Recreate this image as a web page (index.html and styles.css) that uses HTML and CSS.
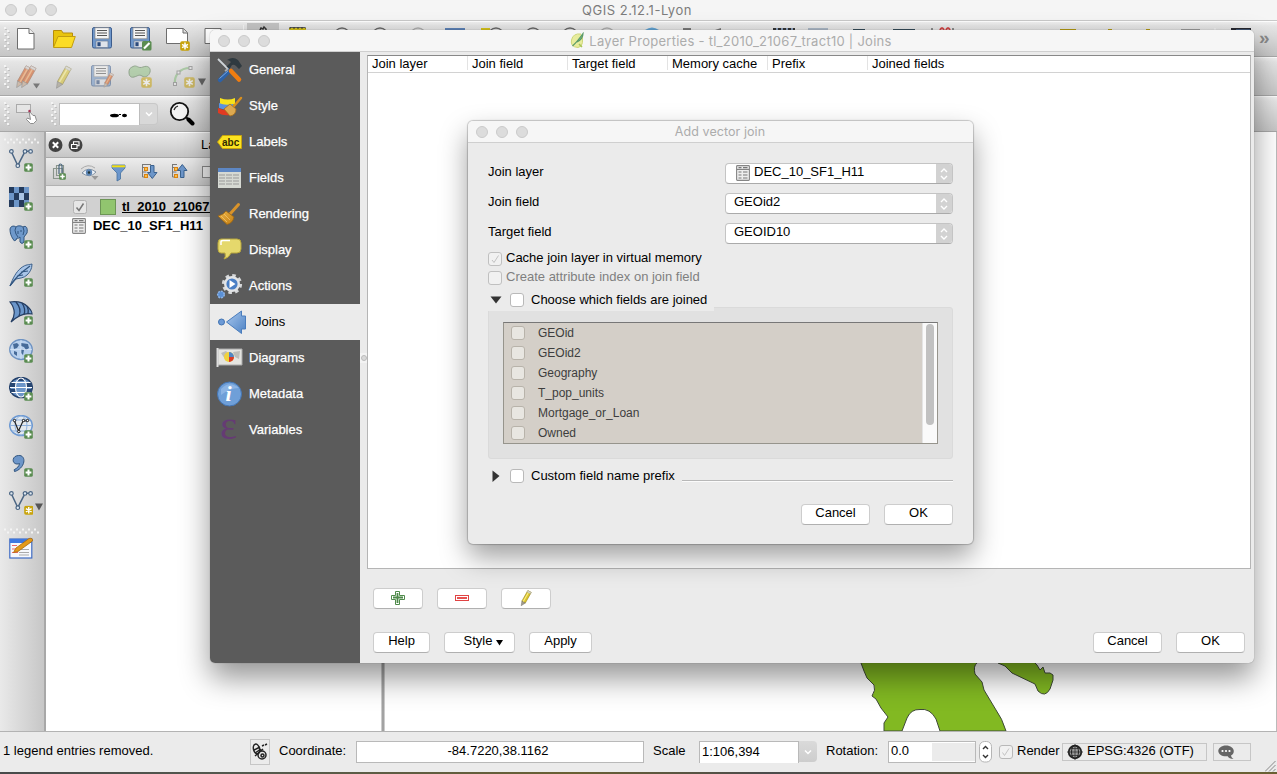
FILE: index.html
```html
<!DOCTYPE html>
<html lang="en">
<head>
<meta charset="utf-8">
<title>QGIS 2.12.1-Lyon</title>
<link rel="stylesheet" href="styles.css">
</head>
<body>
<svg class="defs" width="0" height="0">
  <defs>
    <linearGradient id="gBlue" x1="0" y1="0" x2="1" y2="1"><stop offset="0" stop-color="#a9c8ee"/><stop offset="1" stop-color="#4d82c4"/></linearGradient>
    <linearGradient id="gGold" x1="0" y1="0" x2="1" y2="1"><stop offset="0" stop-color="#f0b84a"/><stop offset="1" stop-color="#c27c10"/></linearGradient>
    <symbol id="plus" viewBox="0 0 9 9"><rect x=".2" y=".2" width="8.6" height="8.6" rx="1.6" fill="#5a8c51"/><path d="M4.5 1.6v5.8M1.6 4.5h5.8" stroke="#fff" stroke-width="2"/></symbol>
    <symbol id="star" viewBox="0 0 10 10"><rect x=".2" y=".2" width="9.6" height="9.6" rx="1.8" fill="#c9a40c"/><path d="M5 1.5v7M2 3.3l6 3.4M8 3.3L2 6.7" stroke="#fff" stroke-width="1.5"/></symbol>
    <symbol id="floppy" viewBox="0 0 20 22"><rect x=".5" y=".5" width="19" height="20.5" rx="1.6" fill="#6f97cb" stroke="#3c5c8c"/><rect x="3" y=".8" width="14" height="11" fill="#f4f4f4" stroke="#888" stroke-width=".7"/><path d="M5 3.5h10M5 6h10M5 8.5h10" stroke="#555" stroke-width="1.1"/><rect x="4" y="14" width="12" height="6.5" fill="#dfe3ea" stroke="#6a7b94" stroke-width=".7"/><rect x="5.4" y="15.2" width="3.2" height="4" fill="#2b4a7c"/></symbol>
    <symbol id="vnodes" viewBox="0 0 24 24"><path d="M2.8 3.8L8.2 15.3M9.4 15.3L15.3 3.8M17.5 2.3h3" fill="none" stroke="#4a6583" stroke-width="1.5"/><g fill="#dfe8f0" stroke="#4a6583" stroke-width="1.2"><circle cx="2.4" cy="2.4" r="1.8"/><circle cx="8.8" cy="16.7" r="1.8"/><circle cx="16" cy="2.4" r="1.8"/><circle cx="21.6" cy="2.4" r="1.8"/></g></symbol>
    <symbol id="table" viewBox="0 0 14 16"><rect x=".6" y=".6" width="12.8" height="14.8" rx=".8" fill="#eee" stroke="#858585" stroke-width="1.1"/><path d="M1 4.4h12" stroke="#777"/><path d="M2.500 2.600h3M7 2.600h4.500M2.500 7h3M7 7h4.500M2.500 10h3M7 10h4.500M2.500 13h3M7 13h4.500" stroke="#777" stroke-width="1.1"/></symbol>
    <symbol id="pencil" viewBox="0 0 16 22"><path d="M10.500 .8l4.700 2.500L7 18 2.300 15.300z" fill="#dcc62e" stroke="#907c14" stroke-width=".8"/><path d="M12 2.500L4 16" stroke="#fbf08a" stroke-width="1.400"/><path d="M2.300 15.300L7 18l-5.600 3.600z" fill="#a39c88" stroke="#666" stroke-width=".6"/><path d="M10.500 .8l4.700 2.500-1.200 2L9.300 2.800z" fill="#d8d8cc" stroke="#999" stroke-width=".5"/></symbol>
    <symbol id="pencilRed" viewBox="0 0 16 22"><path d="M10.500 .8l4.700 2.500L7 18 2.300 15.300z" fill="#d8591c" stroke="#8a4a26" stroke-width=".7"/><path d="M12.800 2L4.500 16.600" stroke="#f4a05c" stroke-width="1.500"/><path d="M2.300 15.300L7 18l-5.600 3.600z" fill="#c9a88c" stroke="#666" stroke-width=".6"/><path d="M10.500 .8l4.700 2.500-1.200 2L9.300 2.800z" fill="#d8d0cc" stroke="#888" stroke-width=".5"/></symbol>
    <pattern id="gripV" width="6" height="6" patternUnits="userSpaceOnUse"><rect x="0" y="0" width="2" height="2" fill="#f4f4f4"/><rect x="3" y="3" width="2" height="2" fill="#f4f4f4"/><path d="M1 2.500h2M4 5.500h2" stroke="#c0c0c0" stroke-width="1"/></pattern>
  </defs>
</svg>

<div class="app">
  <header class="titlebar">
    <div class="lights"><i></i><i></i><i></i></div>
    <div class="title title-main">QGIS 2.12.1-Lyon</div>
  </header>

  <div class="toolbar row-file">
    <svg class="grip" width="7" height="24"><rect width="6" height="24" fill="url(#gripV)"/></svg>
    <span class="tool"><svg width="24" height="24"><path d="M3.500 1.500h11.500l5 5v15.500H3.500z" fill="#fff" stroke="#6d6d6d"/><path d="M15 1.500v5h5" fill="#eee" stroke="#6d6d6d"/></svg></span>
    <span class="tool"><svg width="24" height="24"><path d="M1.500 20V3.500h8l1.500 2.500h9.500V9" fill="#e9c40e" stroke="#b78d0c"/><path d="M1.500 20.500L6 9.500h17.300L19.500 20.500z" fill="#fbdc26" stroke="#c29d10"/></svg></span>
    <span class="tool"><svg width="24" height="24"><use href="#floppy" x="2" y="0" width="20" height="22"/></svg></span>
    <span class="tool"><svg width="24" height="24"><use href="#floppy" x="2" y="0" width="20" height="22"/><rect x="14" y="14" width="9.500" height="9.500" rx="1.500" fill="#5a8c51"/><path d="M16 21.500l5.500-5.500" stroke="#fff" stroke-width="2.200"/></svg></span>
    <span class="tool"><svg width="26" height="24"><path d="M1.500 1.500h17l4 4v11H1.500z" fill="#fff" stroke="#6d6d6d"/><path d="M18 1.500v4.500h4.500" fill="#ddd" stroke="#6d6d6d"/><use href="#star" x="15" y="14" width="10" height="10"/></svg></span>
    <span class="tool"><svg width="24" height="24"><path d="M1 1.500h16v15H1z" fill="#fff" stroke="#6d6d6d"/></svg></span>
    <svg class="more-tools" width="1018" height="34">
      <path d="M8.500 3v29M980 6v20" stroke="#f4f4f4"/>
      <path d="M12 1h32v30H12z" fill="#c4c4c4"/>
      <path d="M25 8l1-2 2 1 1-2 2 2v4M55 6h15" fill="none" stroke="#333" stroke-width="1.500"/>
      <path d="M54 6h17v4H54z" fill="#d3c01b"/>
      <path d="M54 6h17" stroke="#333" stroke-dasharray="2 2"/>
      <g fill="none" stroke="#666" stroke-width="1.300"><circle cx="107" cy="14" r="8"/><circle cx="145" cy="14" r="8"/><circle cx="183" cy="14" r="8" stroke="#aaa"/><circle cx="261" cy="14" r="8"/><circle cx="298" cy="14" r="8"/><circle cx="335" cy="14" r="8"/><circle cx="372" cy="14" r="8" stroke="#aaa"/></g>
      <path d="M210 6h20v5h-20z" fill="#5b80b4"/><path d="M246 6h9v4h-9z" fill="#d3c01b"/>
      <path d="M410 8q7-5 14 0z" fill="#60a0cf"/><path d="M448 6h8v3h-8zM480 8l6-2v3z" fill="#777"/>
      <path d="M538 6h22v4h-22z" fill="#8ba0bd"/><path d="M538 7h22" stroke="#333" stroke-width="2" stroke-dasharray="3 2"/>
      <path d="M573 6h20v3h-20z" fill="#a8b4c2"/><path d="M618 8h12M658 8h22" stroke="#354a58" stroke-width="2"/>
      <path d="M697 6v4M718 6v4" stroke="#333"/><path d="M705 8q2-4 4 0M711 8q2-4 4 0" stroke="#c44" stroke-width="2" fill="none"/>
      <path d="M825 8h16M873 8h4M911 8h4" stroke="#b39912" stroke-width="2"/><path d="M946 8h19" stroke="#999" stroke-width="2"/>
      <path d="M996 6h20v4h-20z" fill="#27282f"/><path d="M1001 8h14" stroke="#5b80b4"/>
    </svg>
    <span class="overflow">»</span>
  </div>

  <div class="toolbar row-edit">
    <svg class="grip" width="7" height="24"><rect width="6" height="24" fill="url(#gripV)"/></svg>
    <span class="tool faded"><svg width="28" height="24"><use href="#pencilRed" x="3" y="0" width="17" height="23"/><use href="#pencilRed" x="8" y="0" width="17" height="23"/></svg><svg class="caret" width="7" height="6"><path d="M0 .5h7L3.500 5.500z" fill="#333"/></svg></span>
    <span class="tool faded"><svg width="24" height="24"><use href="#pencil" x="3" y="0" width="17" height="24"/></svg></span>
    <span class="tool faded"><svg width="24" height="24"><use href="#floppy" x="1" y="0" width="20" height="22"/><use href="#pencilRed" x="13" y="7" width="11" height="16"/></svg></span>
    <span class="tool faded"><svg width="24" height="24"><path d="M5 1.500C9-.5 10 4 15 2c5-2 8 1 7 5s-5 6-8 4-4 0-8 1S1 10 1 7s1-4 4-5.500z" fill="#93c286" stroke="#55774e"/><use href="#star" x="13" y="12" width="11" height="11"/></svg></span>
    <span class="tool wide faded"><svg width="24" height="24"><path d="M4 19C3 10 9 3 19 3" fill="none" stroke="#83ba78" stroke-width="2.200"/><g fill="#eee" stroke="#777"><rect x="2.500" y="17.500" width="3" height="3"/><rect x="6" y="6" width="3" height="3"/><rect x="18" y="1.500" width="3" height="3"/></g><use href="#star" x="13" y="12" width="11" height="11"/></svg><svg class="caret-lg" width="8" height="8"><path d="M0 .5h8L4 7.500z" fill="#111"/></svg></span>
  </div>

  <div class="toolbar row-find">
    <svg class="grip" width="7" height="24"><rect width="6" height="24" fill="url(#gripV)"/></svg>
    <svg class="identify" width="26" height="26"><rect x="1.500" y="3.500" width="14" height="8" fill="#e5e5e5" stroke="#aaa"/><path d="M14 10l4 4.500h2l1.500 5-3 3h-3l-4-4 1-1.500 3 1.500z" fill="#fff" stroke="#777" stroke-width=".8"/><circle cx="14.500" cy="10" r="1.200" fill="#a35"/></svg>
    <svg class="grip second" width="7" height="24"><rect width="6" height="24" fill="url(#gripV)"/></svg>
    <div class="find-box"><span class="find-input"><svg width="17" height="5"><ellipse cx="4.500" cy="2.500" rx="4.500" ry="1.800"/><ellipse cx="14.500" cy="2.500" rx="2.500" ry="1.800"/><path d="M9 1h2v1H9z"/></svg></span><span class="find-drop"><svg width="10" height="8"><path d="M2 2.500l3 3 3-3" fill="none" stroke="#fff" stroke-width="1.500"/></svg></span></div>
    <svg class="lens" width="26" height="26"><circle cx="10.500" cy="10.500" r="8.700" fill="#f3f3f3" stroke="#111" stroke-width="1.800"/><path d="M5 9a6 6 0 0 1 4-4" fill="none" stroke="#222" stroke-width="1.300"/><path d="M17 16l2 2" stroke="#111" stroke-width="2"/><path d="M19.500 18.500l4 4" stroke="#000" stroke-width="4" stroke-linecap="round"/></svg>
  </div>

  <main class="work">
    <aside class="layer-tools">
      <svg class="hgrip" width="36" height="7"><path d="M0 1.500h36" stroke="#f4f4f4" stroke-width="2" stroke-dasharray="2 4"/><path d="M3 4.500h33" stroke="#f4f4f4" stroke-width="2" stroke-dasharray="2 4"/></svg>
      <span class="cell"><svg width="24" height="24"><use href="#vnodes" width="24" height="24"/><use href="#plus" x="15" y="14" width="9" height="9"/></svg></span>
      <span class="cell"><svg width="24" height="24"><rect width="20" height="20" fill="#6d96c8"/><path d="M0 0h5v6H0zM10 0h5v6h-5zM5 6h5v7H5zM15 6h5v7h-5zM0 13h5v7H0zM10 13h5v7h-5z" fill="#243b5c"/><path d="M10 6h5v7h-5z" fill="#a9c4e4"/><use href="#plus" x="15" y="15" width="9" height="9"/></svg></span>
      <span class="cell"><svg width="24" height="24"><path d="M1 4C2 0 6 1 7 2c2-2 6-1 7 0 3-2 5 1 4 6l-3 4v5q-2 3-4 0v-5q-2 2-3 1l-1 2q-2 2-3-1C2 11 1 8 1 4z" fill="#6f99cb" stroke="#31557f"/><path d="M7 2Q5 5 7 9l2 3M14 2q2 4 0 8M9 6v3M12 5v2" fill="none" stroke="#31557f"/><use href="#plus" x="15" y="15" width="9" height="9"/></svg></span>
      <span class="cell"><svg width="24" height="24"><path d="M1 23C4 15 7 9 12 5s8-3 11-4c0 5-2 8-5 11S11 15 7 16z" fill="#a8c5e8" stroke="#3b5f8a"/><path d="M1 23Q7 13 21 3M8 13l6-1M12 9l7-1" fill="none" stroke="#31557f" stroke-width="1.200"/><use href="#plus" x="15" y="15" width="9" height="9"/></svg></span>
      <span class="cell"><svg width="24" height="24"><path d="M1 1c7-1 14 1 18 5s4 5 4 7q-10-2-21 8Q9 11 1 1z" fill="#6b96ca" stroke="#253e63" stroke-width="1.200"/><path d="M7 1q6 7 3 14M13 2q4 6 2 11.500M18 5q2 4 1 8" fill="none" stroke="#253e63" stroke-width="1.300"/><use href="#plus" x="15" y="15" width="9" height="9"/></svg></span>
      <span class="cell"><svg width="24" height="24"><ellipse cx="12" cy="10.500" rx="11.300" ry="10" fill="#b8d0ed" stroke="#6e93c2" stroke-width="1.300"/><path d="M4 5l4-1 2 2-2 3-3 1zM12 4l7 1 1 4-3 2-2-3-3-1zM12 10l3 1-1 5-2-2zM5 12l3 1v4l-3-2z" fill="#466b99"/><path d="M1 10.500h22M12 1v19" stroke="#e0ebf7" stroke-width=".6"/><use href="#plus" x="15" y="15" width="9" height="9"/></svg></span>
      <span class="cell"><svg width="24" height="24"><ellipse cx="12" cy="10.500" rx="11.300" ry="10" fill="#6d96c9" stroke="#24416b" stroke-width="1.500"/><path d="M1 6h6v4H1zM17 6h6v4h-6zM1 12h6v4H1zM17 12h6v4h-6zM8 1h8v3H8z" fill="#274672"/><path d="M1 10.500h22M2.500 5.500h19M2.500 15.500h19" stroke="#fff" stroke-width="1.100"/><ellipse cx="12" cy="10.500" rx="5.500" ry="9.500" fill="none" stroke="#fff" stroke-width="1.100"/><use href="#plus" x="15" y="15" width="9" height="9"/></svg></span>
      <span class="cell"><svg width="24" height="24"><ellipse cx="12" cy="10.500" rx="11.300" ry="10" fill="#e3e9ee" stroke="#6e9ad3" stroke-width="1.500"/><path d="M1 10.500h22M3 5h18M3 16h18" stroke="#8fb1dd"/><ellipse cx="12" cy="10.500" rx="6" ry="9.500" fill="none" stroke="#8fb1dd"/><path d="M5.500 6L9.500 16 14 6h5" fill="none" stroke="#222" stroke-width="1.200"/><g fill="#fff" stroke="#111"><circle cx="5.500" cy="5.500" r="1.200"/><circle cx="9.800" cy="16.500" r="1.200"/><circle cx="14.500" cy="5.500" r="1.200"/><circle cx="18.500" cy="5.500" r="1.200"/></g><use href="#plus" x="15" y="15" width="9" height="9"/></svg></span>
      <span class="cell"><svg width="24" height="24"><path d="M9.500 2.500c4-.5 6 3 5.300 6.500C14 13.500 10 17.500 5.500 18.500l-.3-1.800c3-1.500 5-3.500 5.300-6.200C7 12 3.800 10 4.200 6.700 4.500 4 6.700 2.700 9.500 2.500z" fill="#6d96c9" stroke="#31557f"/><use href="#plus" x="15" y="15" width="9" height="9"/></svg></span>
      <span class="cell"><svg width="24" height="24"><use href="#vnodes" width="24" height="24"/><use href="#star" x="15" y="14.500" width="9.500" height="9.500"/></svg><svg class="cell-caret" width="8" height="8"><path d="M0 .5h8L4 7.500z" fill="#555"/></svg></span>
      <svg class="hgrip low" width="36" height="7"><path d="M0 1.500h36" stroke="#f4f4f4" stroke-width="2" stroke-dasharray="2 4"/><path d="M3 4.500h33" stroke="#f4f4f4" stroke-width="2" stroke-dasharray="2 4"/></svg>
      <svg class="form-icon" width="24" height="24"><rect x=".8" y="2" width="22" height="19" fill="#f6f8fc" stroke="#3f6cc4" stroke-width="1.200"/><path d="M1 2h22v4H1z" fill="#3d78e0"/><path d="M3 8.500h5M3 12h4M3 15.500h6" stroke="#e66" stroke-width="1.200"/><path d="M10 15.500h10M10 12.500h10M10 18h10" stroke="#aaa"/><path d="M20 1.500q4-1 3.500 2.500L9 14.500l-4.500 1L7 11z" fill="#e39a1a" stroke="#a8690c" stroke-width=".8"/></svg>
    </aside>

    <section class="layers">
      <div class="panel-head">
        <svg width="38" height="16"><circle cx="7.500" cy="8" r="7" fill="#424242"/><path d="M4.800 5.300l5.400 5.400M10.200 5.300l-5.400 5.400" stroke="#fff" stroke-width="2"/><circle cx="27.500" cy="8" r="7" fill="#424242"/><path d="M23.500 7.500h5.500v4h-5.500zM25.500 7V4.700H31v4h-2" fill="none" stroke="#fff" stroke-width="1.100"/></svg>
        <span class="panel-title">La</span>
      </div>
      <div class="panel-tools">
        <svg width="160" height="20">
          <path d="M2.500 6.500h9v10h-9zM5.500 3.500h7v10h-7z" fill="none" stroke="#8a958c" stroke-width="1.100"/><path d="M8 12V4q0-2 1.500-2T11 4v7" fill="none" stroke="#49667e" stroke-width="1.200"/><use href="#plus" x="8" y="11" width="7" height="7"/>
          <path d="M31 11q6-7 14-1-6 7-14 1z" fill="#f2f6fb" stroke="#8090a0"/><circle cx="38" cy="10.500" r="3.200" fill="#5c85b5"/><circle cx="38" cy="10.500" r="1.200" fill="#233"/><path d="M30 7q7-6 14-1" fill="none" stroke="#aaa"/><path d="M40.500 14h7L44 18z" fill="#999"/>
          <path d="M61 3h13v3l-4.500 5v6l-3.500 2v-8L61 6z" fill="#6b96cc" stroke="#44709e" stroke-width=".8"/><path d="M61 3.300h13v2H61z" fill="#f3df12"/>
          <path d="M91.500 2v13h4M91.500 5.500h4M91.500 10h4M92 2.500h8" fill="none" stroke="#777"/><rect x="93.500" y="5.500" width="3" height="3" fill="#f8c04c" stroke="#db8211"/><rect x="93.500" y="12.500" width="3" height="3" fill="#f8c04c" stroke="#db8211"/>
          <path d="M99.500 3.500h3.500v7h3l-4.700 6-4.800-6h3z" fill="#6d96c9" stroke="#3b628f"/>
          <path d="M121.500 2v13h4M121.500 5.500h4M121.500 10h4M122 2.500h4" fill="none" stroke="#777"/><rect x="123.500" y="5.500" width="3" height="3" fill="#f8c04c" stroke="#db8211"/><rect x="123.500" y="12.500" width="3" height="3" fill="#f8c04c" stroke="#db8211"/><path d="M129.500 15.500h3.500V8.500h3l-4.700-6-4.800 6h3z" fill="#6d96c9" stroke="#3b628f"/>
          <rect x="151.500" y="4.500" width="12" height="11" fill="#eee" stroke="#888"/>
        </svg>
      </div>
      <div class="panel-gap"></div>
      <div class="layer-row selected">
        <svg class="chk" width="14" height="14"><rect x=".5" y=".5" width="13" height="13" rx="2" fill="#e6e6e6" stroke="#b2b2b2"/><path d="M3.500 7.500l2.500 3 4.500-7" fill="none" stroke="#777" stroke-width="1.500"/></svg>
        <span class="swatch"></span><span class="layer-name underline">tl_2010_21067_tract10</span>
      </div>
      <div class="layer-row plain"><svg width="14" height="16"><use href="#table" width="14" height="16"/></svg><span class="layer-name">DEC_10_SF1_H11</span></div>
    </section>

    <div class="splitter"></div>
    <section class="map">
      <svg width="891" height="599" viewBox="385 132 891 599">
        <path d="M858 640L861 663 864 671 867 678 874 685Q876 690 872 696L876 699 881 708 888 717 884 723 884 731H902L907 718Q911 709 920 709.500 930 708 936 719L940 731H1006Q1002 718 996 710L990 700 984 690 982 682 975 674Q973 666 977 663V640z" fill="#82b922" stroke="#3f4a38"/>
        <path d="M990 655L998 663 1005 666 1012 673 1035 684 1038 691Q1045 698 1050 689L1053 680 1053 675 1050 673H1045L1043 667 1040 670 1037 665 1035 663V655z" fill="#82b922" stroke="#3f4a38"/>
      </svg>
    </section>
  </main>

  <footer class="status">
    <span class="st-msg">1 legend entries removed.</span>
    <span class="st-track"><svg width="18" height="20"><g fill="none" stroke="#222" stroke-width="1.500"><ellipse cx="5.500" cy="7" rx="3" ry="5" transform="rotate(-15 5.500 7)"/><path d="M3 8l6-3M4 11l6-4M4 14l8-7"/><ellipse cx="11" cy="13" rx="4" ry="4"/><circle cx="11.500" cy="13.500" r="1.500"/><path d="M11 4l2-1M14 3l2-1"/></g></svg></span>
    <span class="st-label coord-l">Coordinate:</span>
    <span class="st-input coord">-84.7220,38.1162</span>
    <span class="st-label scale-l">Scale</span>
    <span class="st-scale"><b>1:106,394</b><i><svg width="10" height="8"><path d="M2 2.500l3 3 3-3" fill="none" stroke="#fff" stroke-width="1.500"/></svg></i></span>
    <span class="st-label rot-l">Rotation:</span>
    <span class="st-input rot"><span>0.0</span><i></i></span>
    <svg class="st-spin" width="13" height="22"><rect x=".5" y=".5" width="12" height="20.500" rx="5" fill="#fff" stroke="#b5b5b5"/><path d="M4 8l2.500-2.500L9 8M4 14l2.500 2.500L9 14" fill="none" stroke="#333" stroke-width="1.400"/></svg>
    <svg class="st-chk" width="14" height="14"><rect x=".5" y=".5" width="13" height="13" rx="2.500" fill="#f1f1f1" stroke="#b8b8b8"/><path d="M3.500 7.500l2 3 4.500-7" fill="none" stroke="#c4c4c4"/></svg>
    <span class="st-label render-l">Render</span>
    <span class="st-box epsg"><svg width="16" height="16"><circle cx="8" cy="8" r="6.300" fill="#9a9a9a" stroke="#222" stroke-width="1.800"/><path d="M0 8h16M8 0v16M3 4.500h10M3 11.500h10" stroke="#333" stroke-width=".8"/><ellipse cx="8" cy="8" rx="3.500" ry="6.500" fill="none" stroke="#222"/></svg><span>EPSG:4326 (OTF)</span></span>
    <span class="st-box msgs"><svg width="17" height="15"><path d="M8 .5c4.500 0 7.800 2.500 7.800 5.500 0 2-1 3.500-2.800 4.500.2 1.500 1.200 2.800 2.500 3.500-3 0-4.800-1-5.800-2.700H8C3.500 11.300.3 9 .3 6S3.500.5 8 .5z" fill="#666"/><circle cx="4.500" cy="6" r="1.100" fill="#fff"/><circle cx="8" cy="6" r="1.100" fill="#fff"/><circle cx="11.500" cy="6" r="1.100" fill="#fff"/></svg></span>
    <svg class="resize" width="11" height="11"><path d="M0 10.500L10.500 0M4 10.500L10.500 4M8 10.500l2.500-2.500" stroke="#888"/></svg>
  </footer>
  <div class="desk"></div>
</div>

<div class="window props">
  <header class="win-bar">
    <div class="lights"><i></i><i></i><i></i></div>
    <div class="title title-props"><svg width="15" height="17"><path d="M11 2Q3 1 1.500 8T8 15.500q4-.5 4.500-5V4" fill="#e7ec9c" stroke="#cdd678"/><path d="M2.500 14Q7 10 13 1.500 13 7 7 10" fill="#7fb98a" stroke="#5a9a68" stroke-width="1.200"/><path d="M9 12l3 3" stroke="#a8c558" stroke-width="1.500"/></svg><span>Layer Properties - tl_2010_21067_tract10 | Joins</span></div>
  </header>
  <div class="props-body">
    <nav class="side">
      <a><svg width="30" height="28"><path d="M3 3l12 12" stroke="#cfd4d8" stroke-width="1.800"/><path d="M14 15L5 24" stroke="#2d62a8" stroke-width="4.500" stroke-linecap="round"/><path d="M13 15L4.500 22.500" stroke="#79a5dc" stroke-width="1"/><path d="M16 15l8 8.500" stroke="#f07d10" stroke-width="4.500" stroke-linecap="round"/><path d="M13 13l-3 2" stroke="#aaa" stroke-width="2"/><path d="M12 4q6-4 11 0l4 6-3 3-3-3q-2-2-4-1l-2.500 4-3-2.500L16 6q-2-2-4-2z" fill="#2f3a40"/></svg>General</a>
      <a><svg width="30" height="28"><path d="M5 6q8 3 15 0v6q-7 3-15 0z" fill="#f8e21c"/><path d="M4 11q6 3 14 1v5q-7 2-14-1z" fill="#5a92e0"/><path d="M3 16q6 3 14 2l-2 5q-7 1-12-2z" fill="#e23a22"/><path d="M26 6l-7 8" stroke="#d98f1e" stroke-width="2.500" stroke-linecap="round"/><path d="M15 12l6 5q0 6-6 7l-6-7z" fill="#dda950" stroke="#a8701a" stroke-width=".8"/></svg>Style</a>
      <a><svg width="30" height="28"><path d="M2.500 14l5-6.500h19v13h-19z" fill="#fbe321" stroke="#c8a40d"/><text x="7" y="18" class="abc">abc</text></svg>Labels</a>
      <a><svg width="30" height="28"><rect x="3" y="4" width="23" height="20" fill="#d6d9d3"/><path d="M3 4h23v4H3z" fill="#5d87c4"/><path d="M4 11h21M4 14h21M4 17h21M4 20h21" stroke="#999" stroke-dasharray="6 1"/></svg>Fields</a>
      <a><svg width="30" height="28"><path d="M23.500 4.500L15 14" stroke="#d9932a" stroke-width="3" stroke-linecap="round"/><path d="M11 11l8 6q-1 6-7 7.500L3 16q5-1 8-5z" fill="url(#gGold)" stroke="#9c6411" stroke-width=".8"/><path d="M9 14l6 6M6 16l6 6" stroke="#f5c877" stroke-width=".7"/></svg>Rendering</a>
      <a><svg width="30" height="28"><path d="M6 3h16q4 0 4 4v6q0 4-4 4h-6q-2 5-7 6 2-2 1-6H6q-3 0-3-4V7q0-4 3-4z" fill="#e5d86c" stroke="#b7a63c"/><path d="M6 9V6q0-1.500 2-1.500h7" stroke="#fff" fill="none" stroke-width="1.500"/></svg>Display</a>
      <a><svg width="30" height="28"><circle cx="17" cy="12" r="8.600" fill="none" stroke="#d6d8da" stroke-width="3" stroke-dasharray="3.500 3.250"/><circle cx="17" cy="12" r="6.800" fill="#4a7fc5" stroke="#e2e4e6" stroke-width="2.400"/><path d="M14.500 8v8l6-4z" fill="#fff"/><circle cx="6" cy="22.500" r="3.300" fill="#5a90d6" stroke="#8fb4e4" stroke-width="1.500" stroke-dasharray="2 1"/></svg>Actions</a>
      <a class="active"><svg width="36" height="28"><circle cx="6.500" cy="14" r="3" fill="#6c9ad6" stroke="#4173b2"/><path d="M11.500 14L26.500 3v5h4v13h-4v4.500z" fill="url(#gBlue)" stroke="#4a7dbd"/></svg>Joins</a>
      <a><svg width="30" height="28"><path d="M3 5h24v16H3z" fill="#e4e4e0" stroke="#aaa"/><path d="M2.500 4v19" stroke="#ddd" stroke-width="2"/><path d="M6 9l5-2 3 3-4 5zM18 8l7-1-1 8-4-2z" fill="#bdbdb8"/><circle cx="14" cy="13" r="5" fill="#f0d23c"/><path d="M14 13V8a5 5 0 0 1 5 5z" fill="#5185c4"/><path d="M14 13h5a5 5 0 0 1-5 5z" fill="#da3b27"/></svg>Diagrams</a>
      <a><svg width="30" height="28"><circle cx="14.500" cy="14" r="12" fill="#6f9fd8" stroke="#4475b4"/><path d="M6 9q8-9 18-1-9 0-18 7z" fill="#8cb4e4"/><text x="10.500" y="21" class="info-i">i</text></svg>Metadata</a>
      <a><svg class="open" width="30" height="28"><text x="5" y="22.500" class="eps">ε</text></svg>Variables</a>
    </nav>
    <div class="side-handle"><i></i></div>
    <div class="props-main">
      <div class="join-table"><div class="join-head"><span>Join layer</span><span>Join field</span><span>Target field</span><span>Memory cache</span><span>Prefix</span><span>Joined fields</span></div></div>
      <div class="icon-buttons">
        <button class="btn"><svg width="16" height="16"><path d="M5.500 1.500h4v4h5v4h-5v5h-4v-5h-4v-4h4z" fill="#fff" stroke="#4f8a4a"/><path d="M7.500 3v10M3 7.500h10" stroke="#4f8a4a" stroke-width="1.800"/></svg></button>
        <button class="btn"><svg width="16" height="16"><rect x="1.500" y="5.500" width="13" height="5" fill="#fff" stroke="#e04444"/><path d="M3 8h10" stroke="#e85050" stroke-width="2"/></svg></button>
        <button class="btn"><svg width="16" height="16"><use href="#pencil" x="2" y="0" width="12" height="16"/></svg></button>
      </div>
      <div class="props-actions">
        <button class="btn help">Help</button><button class="btn style">Style<svg width="7" height="6"><path d="M0 0h7L3.500 5.500z"/></svg></button><button class="btn apply">Apply</button>
        <span class="spacer"></span><button class="btn dlg">Cancel</button><button class="btn dlg">OK</button>
      </div>
    </div>
  </div>
</div>

<div class="window join">
  <header class="win-bar">
    <div class="lights"><i></i><i></i><i></i></div>
    <div class="title title-join">Add vector join</div>
  </header>
  <div class="join-body">
    <div class="field"><label>Join layer</label><div class="select with-icon"><svg width="14" height="16"><use href="#table" width="14" height="16"/></svg><span>DEC_10_SF1_H11</span><i><svg width="10" height="14"><path d="M2 5l3-3 3 3M2 9l3 3 3-3" fill="none" stroke="#fff" stroke-width="1.400"/></svg></i></div></div>
    <div class="field"><label>Join field</label><div class="select"><span>GEOid2</span><i><svg width="10" height="14"><path d="M2 5l3-3 3 3M2 9l3 3 3-3" fill="none" stroke="#fff" stroke-width="1.400"/></svg></i></div></div>
    <div class="field"><label>Target field</label><div class="select"><span>GEOID10</span><i><svg width="10" height="14"><path d="M2 5l3-3 3 3M2 9l3 3 3-3" fill="none" stroke="#fff" stroke-width="1.400"/></svg></i></div></div>
    <div class="option"><span class="box dim"><svg width="12" height="12"><path d="M3 7l2 2.500L9.500 2.500" fill="none" stroke="#c2c2c2"/></svg></span><span>Cache join layer in virtual memory</span></div>
    <div class="option disabled"><span class="box dim"></span><span>Create attribute index on join field</span></div>
    <div class="group-head"><svg width="12" height="8"><path d="M.5 .5h11L6 7.500z" fill="#333"/></svg><span class="box"></span><span>Choose which fields are joined</span></div>
    <div class="group">
      <div class="list">
        <div class="items">
          <div><span class="box tan"></span>GEOid</div><div><span class="box tan"></span>GEOid2</div><div><span class="box tan"></span>Geography</div><div><span class="box tan"></span>T_pop_units</div><div><span class="box tan"></span>Mortgage_or_Loan</div><div><span class="box tan"></span>Owned</div>
        </div>
        <div class="scroll"><i></i></div>
      </div>
    </div>
    <div class="custom"><svg width="8" height="12"><path d="M.5 .5v11.500L7.500 6z" fill="#333"/></svg><span class="box"></span><span>Custom field name prefix</span><hr></div>
    <div class="join-actions"><button class="btn dlg">Cancel</button><button class="btn dlg">OK</button></div>
  </div>
</div>
</body>
</html>
```
FILE: styles.css
```css
* { box-sizing: border-box; }
body { margin: 0; width: 1277px; height: 774px; overflow: hidden; position: relative; font: 13px/16px "Liberation Sans", Arial, sans-serif; color: #000; background: #ebebeb; white-space: nowrap; }
svg { display: block; flex: none; }
svg.open { overflow: visible; }
i, b { font-style: normal; font-weight: normal; }
.defs { position: absolute; }

.app { display: flex; flex-direction: column; width: 1277px; height: 774px; }
.titlebar { height: 21px; flex: none; display: flex; align-items: center; background: #f5f5f5; border-bottom: 1px solid #c9c9c9; }
.lights { display: flex; gap: 8px; padding-left: 5px; flex: none; }
.lights i { width: 12px; height: 12px; border-radius: 50%; background: #dcdcdc; border: 1px solid #cacaca; }
.title { font-family: Inter, Roboto, sans-serif; font-size: 12.500px; color: #acacac; flex: 1; display: flex; justify-content: center; align-items: center; }
.title-main { color: #7c7c7c; padding-right: 60px; font-size: 13px; letter-spacing: .5px; }

.toolbar { flex: none; display: flex; align-items: center; background: linear-gradient(#f0f0f0 0, #e5e5e5 4px, #c6c6c6 100%); border-top: 1px solid #fdfdfd; border-bottom: 1px solid #a8a8a8; overflow: hidden; }
.row-file { height: 36px; }
.row-edit { height: 39px; }
.row-find { height: 36px; }
.grip { margin-left: 4px; margin-right: -4px; }
.tool { width: 38px; height: 24px; flex: none; display: flex; justify-content: center; position: relative; }
.faded { opacity: .55; }
.tool.wide { width: 50px; padding-right: 2px; }
.caret { position: absolute; left: 26px; top: 18px; }
.caret-lg { position: absolute; left: 39px; top: 13px; }
.overflow { font: bold 19px/20px "Liberation Sans", sans-serif; color: #888; padding-bottom: 2px; margin-left: 6px; }
.identify { margin-left: 8px; }
.grip.second { margin-left: 10px; margin-right: 1px; }
.find-box { display: flex; height: 22px; }
.find-input { width: 81px; background: #fff; border: 1px solid #bdbdbd; border-bottom: 0; display: flex; align-items: center; justify-content: flex-end; padding: 2px 12px 0 0; }
.find-drop { width: 18px; background: #d8d8d8; border: 1px solid #c8c8c8; border-left: 0; border-radius: 0 4px 4px 0; display: grid; place-items: center; }
.lens { margin-left: 11px; }

.work { height: 599px; flex: none; display: flex; }
.layer-tools { width: 46px; flex: none; background: linear-gradient(90deg, #e9e9e9, #c7c7c7 44px, #a8a8a8 44px); padding-left: 9px; display: flex; flex-direction: column; }
.hgrip { margin: 6px 0 -3px -5px; }
.hgrip.low { margin: 6px 0 -3px -5px; }
.cell { height: 38px; flex: none; display: flex; align-items: center; }
.cell-caret { margin: 8px 0 0 2px; }
.form-icon { margin-top: 5px; }
.layers { width: 335px; flex: none; background: #fff; }
.panel-head { height: 26px; background: linear-gradient(#e9e9e9, #c6c6c6); border-bottom: 1px solid #a9a9a9; border-top: 1px solid #fff; display: flex; align-items: center; padding-left: 2px; }
.panel-title { margin-left: 115px; }
.panel-tools { height: 28px; background: linear-gradient(#ededed, #c9c9c9); border-bottom: 1px solid #b2b2b2; padding: 4px 0 0 5px; }
.panel-gap { height: 11px; background: #ececec; border-bottom: 1px solid #aaa; }
.layer-row { height: 20px; display: flex; align-items: center; font-weight: bold; font-size: 13px; }
.layer-row.selected { background: #d1d1d1; padding-left: 27px; }
.layer-row.plain { padding: 0 0 2px 26px; letter-spacing: -.05px; }
.swatch { width: 16px; height: 16px; margin: 0 6px 0 13px; background: #91c56f; border: 1px solid #6d9556; }
.underline { text-decoration: underline; }
.plain .layer-name { margin-left: 7px; }
.splitter { width: 4px; flex: none; background: #a2a2a2; border-right: 1px solid #ccc; border-left: 1px solid #ccc; }
.map { width: 892px; background: #fff; border-right: 1px solid #bbb; overflow: hidden; }

.status { height: 41px; flex: none; border-top: 1px solid #b3b3b3; background: #ebebeb; display: flex; align-items: center; padding-left: 3px; position: relative; }
.st-msg { width: 247px; }
.st-track { width: 20px; height: 26px; border: 1px solid #c6c6c6; display: grid; place-items: center; }
.st-label { flex: none; }
.coord-l { width: 86px; padding-left: 9px; }
.st-msg, .st-label { margin-bottom: 2px; }
.st-input { height: 22px; background: #fff; border: 1px solid #b9b9b9; flex: none; display: flex; align-items: center; padding-bottom: 3px; }
.coord { width: 288px; justify-content: center; padding-right: 4px; }
.scale-l { width: 55px; padding-left: 9px; }
.st-scale { display: flex; width: 118px; height: 22px; }
.st-scale b { width: 100px; background: #fff; border: 1px solid #b9b9b9; border-bottom: 0; padding: 2px 0 0 2px; }
.st-scale i { width: 18px; height: 21px; background: linear-gradient(#dadada, #cdcdcd); border-radius: 0 4px 4px 0; display: grid; place-items: center; }
.rot-l { width: 71px; padding-left: 9px; }
.rot { width: 88px; padding: 0 0 0 2px; justify-content: space-between; }
.rot span { margin-bottom: 3px; }
.rot i { width: 43px; height: 18px; background: #ebebeb; }
.st-spin { margin-left: 3px; }
.st-chk { margin-left: 7px; }
.render-l { width: 49px; padding-left: 4px; }
.st-box { height: 18px; border: 1px solid #c6c6c6; display: flex; align-items: center; }
.epsg { width: 145px; padding-left: 4px; gap: 4px; }
.epsg span { margin-top: -2px; }
.msgs { width: 38px; margin-left: 6px; padding-left: 4px; }
.resize { align-self: flex-end; margin-left: 14px; }
.desk { height: 2px; background: linear-gradient(90deg, #484a4a, #555a4e 20%, #6a6033 45%, #4c4c4c 60%, #6a6033 95%); }

.window { position: absolute; background: #ebebeb; border-radius: 5px; overflow: hidden; }
.props { left: 210px; top: 30px; width: 1044px; height: 633px; box-shadow: 0 0 1px rgba(0,0,0,.45), 0 15px 30px rgba(0,0,0,.42); }
.join { left: 468px; top: 121px; width: 505px; height: 423px; box-shadow: 0 0 1px 1px rgba(0,0,0,.2), 0 13px 28px rgba(0,0,0,.38); }
.win-bar { height: 22px; background: #f6f6f6; border-bottom: 1px solid #cfcfcf; display: flex; align-items: center; }
.win-bar .lights { padding-left: 8px; }
.title-props { gap: 4px; padding-right: 62px; font-size: 13px; letter-spacing: .27px; }
.title-props span { margin-top: 1px; }
.title-join { padding-right: 61px; letter-spacing: .07px; }

.props-body { display: flex; height: 611px; }
.side { width: 150px; flex: none; background: #5b5b5b; }
.side a { display: flex; align-items: center; height: 36px; padding-left: 5px; gap: 4px; color: #fff; -webkit-text-stroke: .25px #fff; }
.side a.active { background: #ebebeb; color: #000; -webkit-text-stroke: 0; }
.abc { font: bold 10px "Liberation Sans", sans-serif; fill: #332b00; stroke: none; -webkit-text-stroke: 0; }
.info-i { font: italic bold 22px "Liberation Serif", serif; fill: #fff; }
.eps { font: 41px "Liberation Serif", serif; fill: #653b74; -webkit-text-stroke: .5px #653b74; }
.side-handle { width: 7px; flex: none; align-self: flex-start; margin-top: 301px; height: 10px; background: #f3f3f3; display: grid; place-items: center; }
.side-handle i { width: 6px; height: 6px; border-radius: 50%; background: #d9d9d9; border: 1px solid #bbb; }
.props-main { flex: 1; padding: 3px 3px 0 0; }
.join-table { height: 514px; background: #fff; border: 1px solid #b5b5b5; border-top-color: #888; }
.join-head { display: flex; height: 17px; border-bottom: 1px solid #d2d2d2; }
.join-head span { width: 100px; padding-left: 4px; border-right: 1px solid #e3e3e3; height: 14px; }
.join-head span:last-child { border-right: 0; }
.btn { height: 21px; background: #fff; border: 1px solid #cdcdcd; border-bottom-color: #b0b0b0; border-radius: 4px; font: 13px/16px "Liberation Sans", Arial, sans-serif; color: #000; padding: 0 0 4px; display: flex; align-items: center; justify-content: center; flex: none; }
.icon-buttons { display: flex; gap: 14px; margin: 19px 0 0 6px; }
.icon-buttons .btn { width: 50px; padding: 0 0 1px; }
.props-actions { display: flex; margin: 23px 6px 0 6px; gap: 14px; }
.spacer { flex: 1; }
.help { width: 57px; }
.style { width: 71px; padding-left: 8px; gap: 4px; }
.style svg { margin-top: 4px; }
.apply { width: 63px; }
.dlg { width: 69px; }

.join-body { padding: 20px 20px 0 20px; }
.field { display: flex; height: 21px; margin-bottom: 9px; }
.field label { width: 237px; margin-top: 1px; }
.select { width: 228px; height: 21px; background: #fff; border: 1px solid #c4c4c4; border-bottom-color: #aaa; border-radius: 4px; display: flex; overflow: hidden; padding-left: 8px; }
.select.with-icon { padding-left: 10px; }
.select.with-icon svg { margin-top: 1px; }
.select.with-icon span { margin-left: 4px; }
.select i { width: 16px; margin-left: auto; background: #d2d2d2; display: grid; place-items: center; }
.select.with-icon i svg { margin-top: 0; }
.option { display: flex; height: 19px; }
.field + .option { margin-top: -3px; }
.box { width: 14px; height: 14px; background: #fff; border: 1px solid #b9b9b9; border-radius: 3px; flex: none; }
.option .box { margin: 2px 4px 0 0; }
.box.dim { background: #f1f1f1; border-color: #c0c0c0; }
.option.disabled { color: #7f7f7f; }
.group-head { display: flex; align-items: center; height: 22px; width: 226px; background: #ebebeb; margin: 1px 0 -4px; padding-left: 2px; position: relative; }
.group-head .box { margin: 0 7px 0 8px; }
.group { height: 152px; background: #e1e1e1; border: 1px solid #dadada; border-radius: 3px; padding: 14px 14px 0; }
.list { height: 122px; display: flex; border: 1px solid #96948c; border-top-color: #777; background: #d4cfc8; }
.items { flex: 1; overflow: hidden; color: #3d3d3d; font-size: 12px; }
.items div { display: flex; align-items: center; height: 20px; padding-left: 7px; gap: 13px; }
.box.tan { background: #e8e6e1; border-color: #b8b3aa; }
.scroll { width: 15px; background: #fafafa; border-left: 1px solid #e4e4e4; padding: 1px 0 0 3px; }
.scroll i { display: block; width: 8px; height: 101px; border-radius: 4px; background: #c1c1c1; }
.custom { display: flex; align-items: center; height: 16px; margin-top: 9px; padding-left: 4px; }
.custom .box { margin: 0 7px 0 10px; }
.custom hr { flex: 1; height: 2px; margin: 9px 0 0 7px; border: 0; background: linear-gradient(#b8b8b8 50%, #fbfbfb 50%); }
.join-actions { display: flex; justify-content: flex-end; gap: 14px; margin-top: 20px; }
```
